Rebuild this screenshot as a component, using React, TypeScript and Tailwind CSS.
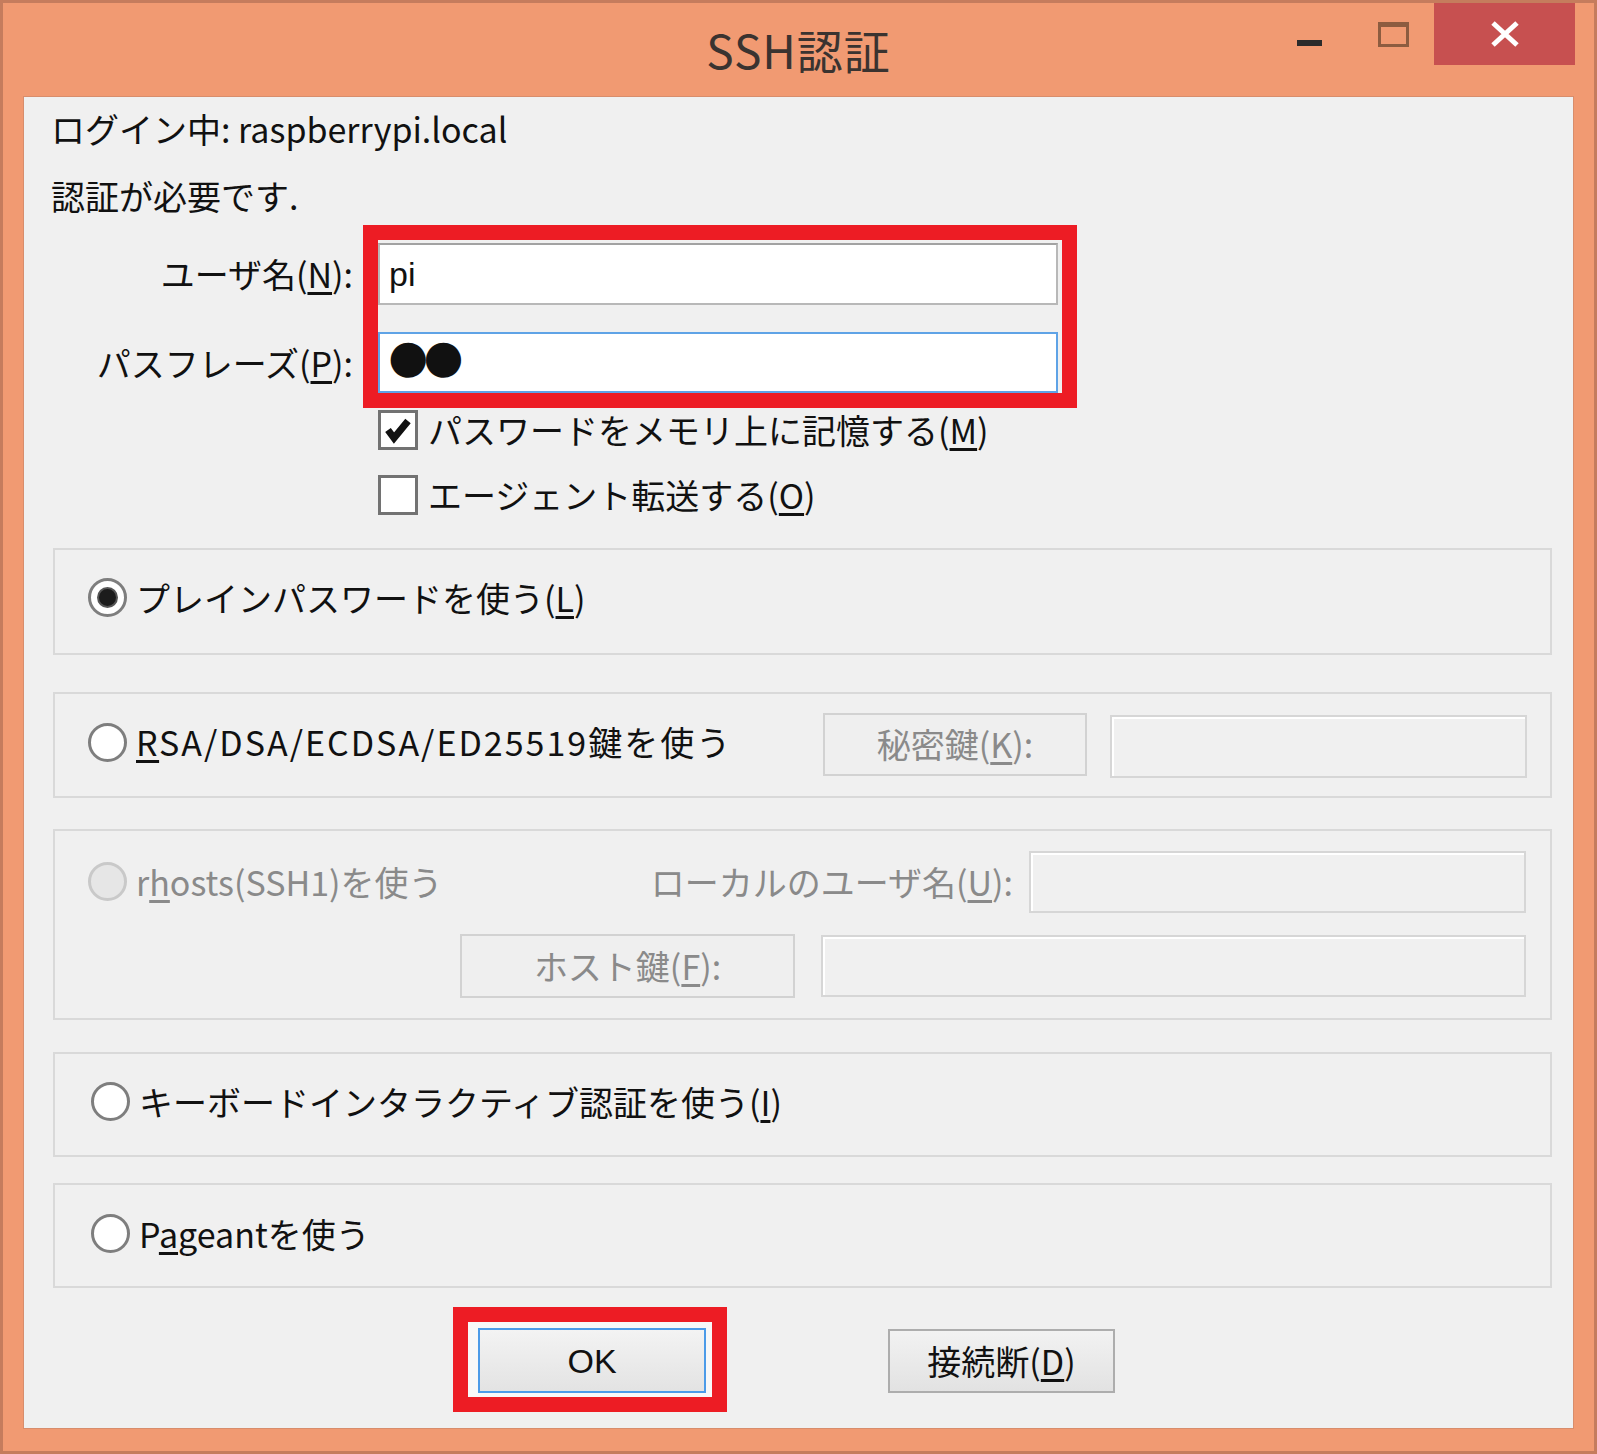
import type { ReactNode } from "react";

const font = "font-['Noto_Sans_CJK_JP','Noto_Sans',sans-serif]";

function Radio({ checked, disabled }: { checked?: boolean; disabled?: boolean }) {
  return (
    <span
      className={`flex h-[39px] w-[39px] shrink-0 items-center justify-center rounded-full border-[3px] ${
        disabled ? "border-[#c9c9c9] bg-[#e6e6e6]" : "border-[#7e7e7e] bg-white"
      }`}
    >
      {checked && <span className="h-[21px] w-[21px] rounded-full border-[2px] border-[#555] bg-[#1c1c1c]" />}
    </span>
  );
}

function Checkbox({ checked }: { checked?: boolean }) {
  return (
    <span className="flex h-[40px] w-[40px] shrink-0 items-center justify-center border-[3px] border-[#727272] bg-white">
      {checked && (
        <svg width="30" height="30" viewBox="0 0 30 30" fill="none">
          <path d="M5 15l6 8L25 6" stroke="#111" strokeWidth="7" strokeLinejoin="miter" />
        </svg>
      )}
    </span>
  );
}

function GroupBox({ className, children }: { className: string; children: ReactNode }) {
  return <div className={`ml-[29px] mr-[21px] border-2 border-[#d9d9d9] ${className}`}>{children}</div>;
}

function DisabledButton({ className, children }: { className: string; children: ReactNode }) {
  return (
    <div className={`flex shrink-0 items-center justify-center border-2 border-[#d2d2d2] bg-[#efefef] text-[#8a8a8a] ${className}`}>
      {children}
    </div>
  );
}

function DisabledField({ className }: { className: string }) {
  return <div className={`shrink-0 border-2 border-[#d6d6d6] bg-[#f0f0f0] shadow-[inset_2px_2px_0_#fff] ${className}`} />;
}

export default function App() {
  return (
    <div className={`${font} flex h-[1454px] w-[1597px] flex-col border-[3px] border-[#c57c5d] bg-[#f19a72] text-[34px] leading-[40px] text-[#111]`}>
      {/* title bar */}
      <div className="grid h-[94px] shrink-0 grid-cols-[1fr_auto_1fr]">
        <div />
        <div className="flex items-center pb-[2px] text-[46px] leading-[56px] tracking-[1px] text-[#3a3330]">SSH認証</div>
        <div className="flex items-start justify-end pr-[19px]">
          <div className="mt-[37px] h-[6px] w-[25px] bg-[#2b2b2b]" />
          <div className="ml-[56px] mt-[19px] h-[25px] w-[31px] border-[3px] border-t-[5px] border-[#8d5c40]" />
          <div className="ml-[25px] flex h-[62px] w-[141px] items-center justify-center bg-[#c75050]">
            <svg width="30" height="26" viewBox="0 0 30 26">
              <path d="M3 2l24 22M27 2L3 24" stroke="#fff" strokeWidth="5" />
            </svg>
          </div>
        </div>
      </div>

      {/* client area */}
      <div className="mx-[21px] mb-[23px] flex flex-1 flex-col bg-[#f0f0f0] pt-[12px] shadow-[0_0_0_1px_#d88d6c]">
        <div className="pl-[27px]">ログイン中: raspberrypi.local</div>
        <div className="mt-[27px] pl-[27px]">認証が必要です.</div>

        <div className="mt-[9px] flex">
          <div className="flex w-[339px] flex-col items-end pr-[10px] pt-[18px]">
            <div className="flex h-[62px] items-center">
              ユーザ名(<u className="underline-offset-4">N</u>):
            </div>
            <div className="mt-[27px] flex h-[61px] items-center">
              パスフレーズ(<u className="underline-offset-4">P</u>):
            </div>
          </div>
          <div className="w-[714px] border-[15px] border-[#ed1c24] pr-[4px] pt-[3px]">
            <div className="flex h-[62px] items-center border-2 border-[#b8b8b8] border-t-[#a2a2a2] bg-white pl-[9px] font-['Liberation_Sans',sans-serif]">
              pi
            </div>
            <div className="mt-[27px] flex h-[61px] items-center border-2 border-[#5fa3e6] bg-white pb-[14px] pl-[8px]">
              <span className="text-[46px] leading-[46px] tracking-[-5px] font-['DejaVu_Sans',sans-serif]">●●</span>
            </div>
          </div>
        </div>

        <div className="mt-[2px] flex items-center gap-[10px] pl-[354px]">
          <Checkbox checked />
          <span>
            パスワードをメモリ上に記憶する(<u className="underline-offset-4">M</u>)
          </span>
        </div>
        <div className="mt-[25px] flex items-center gap-[10px] pl-[354px]">
          <Checkbox />
          <span>
            エージェント転送する(<u className="underline-offset-4">O</u>)
          </span>
        </div>

        <GroupBox className="mt-[33px] flex h-[107px] items-center gap-[9px] pb-[8px] pl-[33px]">
          <Radio checked />
          <span>
            プレインパスワードを使う(<u className="underline-offset-4">L</u>)
          </span>
        </GroupBox>

        <GroupBox className="mt-[37px] flex h-[106px] items-center pb-[6px] pl-[33px] pr-[23px]">
          <Radio />
          <span className="ml-[9px] tracking-[2px]">
            <u className="underline-offset-4">R</u>SA/DSA/ECDSA/ED25519鍵を使う
          </span>
          <div className="flex-1" />
          <DisabledButton className="mt-[4px] h-[63px] w-[264px]">
            秘密鍵(<u className="underline-offset-4">K</u>):
          </DisabledButton>
          <DisabledField className="ml-[23px] mt-[8px] h-[63px] w-[417px]" />
        </GroupBox>

        <GroupBox className="mt-[31px] flex h-[191px] flex-col pl-[33px] pr-[24px] pt-[19px] text-[#8a8a8a]">
          <div className="flex h-[63px] items-center">
            <Radio disabled />
            <span className="ml-[9px]">
              r<u className="underline-offset-4">h</u>osts(SSH1)を使う
            </span>
            <div className="flex-1" />
            <span>
              ローカルのユーザ名(<u className="underline-offset-4">U</u>):
            </span>
            <DisabledField className="ml-[16px] h-[62px] w-[497px]" />
          </div>
          <div className="mt-[21px] flex h-[64px] items-center justify-end">
            <DisabledButton className="h-[64px] w-[335px]">
              ホスト鍵(<u className="underline-offset-4">F</u>):
            </DisabledButton>
            <DisabledField className="ml-[26px] h-[62px] w-[705px]" />
          </div>
        </GroupBox>

        <GroupBox className="mt-[32px] flex h-[105px] items-center gap-[9px] pb-[6px] pl-[36px]">
          <Radio />
          <span>
            キーボードインタラクティブ認証を使う(<u className="underline-offset-4">I</u>)
          </span>
        </GroupBox>

        <GroupBox className="mt-[26px] flex h-[105px] items-center gap-[9px] pb-[4px] pl-[36px]">
          <Radio />
          <span>
            P<u className="underline-offset-4">a</u>geantを使う
          </span>
        </GroupBox>

        <div className="mt-[19px] flex items-center pl-[429px]">
          <div className="h-[105px] w-[274px] border-[15px] border-[#ed1c24] bg-[#f8f8f8] pb-[4px] pl-[10px] pr-[6px] pt-[6px]">
            <div className="flex h-full items-center justify-center border-2 border-[#4c9be8] bg-gradient-to-b from-[#f3f3f3] to-[#e3e3e3] font-['Liberation_Sans',sans-serif]">
              OK
            </div>
          </div>
          <div className="ml-[161px] mt-[3px] flex h-[64px] w-[227px] items-center justify-center border-2 border-[#adadad] bg-gradient-to-b from-[#f2f2f2] to-[#e2e2e2]">
            接続断(<u className="underline-offset-4">D</u>)
          </div>
        </div>
      </div>
    </div>
  );
}
